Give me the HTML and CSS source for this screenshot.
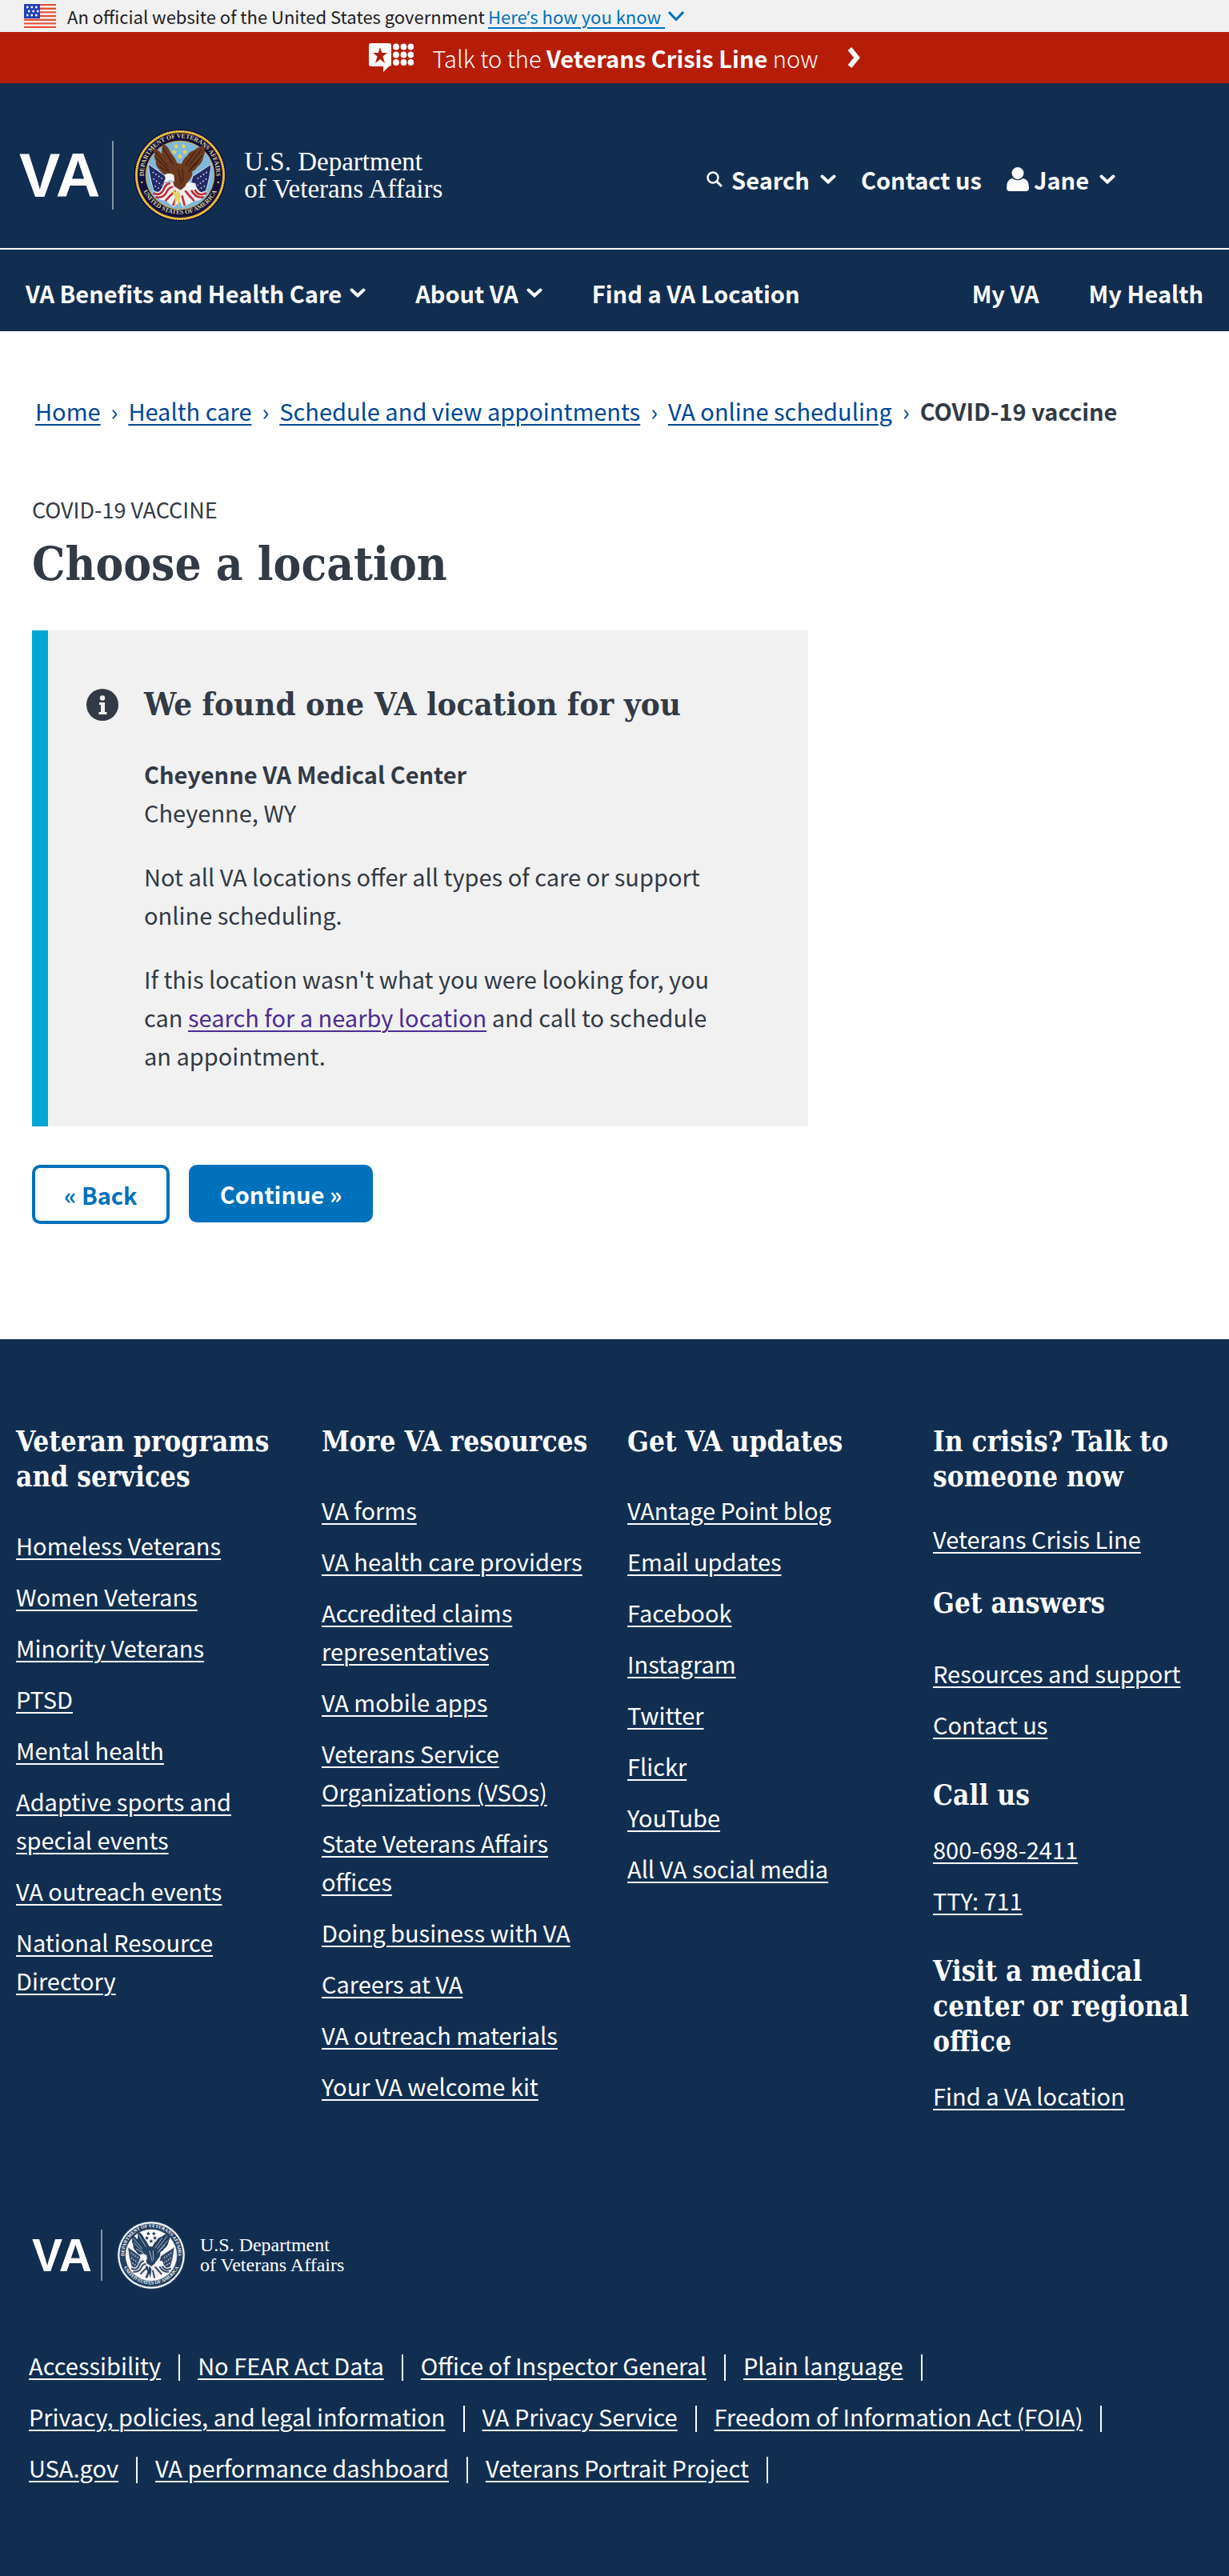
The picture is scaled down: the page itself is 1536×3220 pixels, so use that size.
FILE: index.html
```html
<!DOCTYPE html>
<html lang="en">
<head>
<meta charset="utf-8">
<meta name="viewport" content="width=device-width, initial-scale=1">
<title>Choose a location | Veterans Affairs</title>
<link rel="stylesheet" href="styles.css">
</head>
<body>
<svg class="sprite" aria-hidden="true">
  <symbol id="chevron" viewBox="0 0 20 12"><path d="M2.500 2.500 10 9.500l7.500-7" fill="none" stroke="currentColor" stroke-width="4" stroke-linecap="round"/></symbol>
  <symbol id="seal" viewBox="0 0 120 120">
    <circle class="seal-rim" cx="60" cy="60" r="57.500"/>
    <circle class="seal-rope" cx="60" cy="60" r="56"/>
    <circle class="seal-ring" cx="60" cy="60" r="54"/>
    <circle class="seal-sky" cx="60" cy="60" r="43.500"/>
    <g transform="translate(-6 -5) scale(.339)">
      <path class="seal-flag" d="M76 150 142 196 150 235 128 262 96 250Q80 200 76 150ZM312 150 242 196 232 235 262 262 292 250Q308 200 312 150Z"/>
      <path class="seal-dots" d="M92 180 128 205M94 205 128 230M100 232 124 246M296 180 260 205M294 205 260 230M288 232 264 246"/>
      <path class="seal-stripe-a" d="M92 252Q120 268 134 222L170 214 200 240 220 216 252 222Q262 268 296 252 284 288 250 288L205 312 195 290 170 312 140 286Q104 288 92 252Z"/>
      <path class="seal-stripe-b" d="M94 258Q122 274 136 240 144 222 158 222M104 274Q134 280 146 252 154 236 168 236M140 288Q156 268 178 250M168 306 184 268M294 258Q264 274 250 246M284 274Q252 280 236 246M248 288Q228 268 214 250M212 306 202 268"/>
      <path class="seal-eagle" d="M94 88Q112 94 126 112L128 72Q150 82 160 108 172 120 184 146L200 150Q206 130 222 118 228 104 248 98 262 84 286 82 292 104 282 124 278 146 262 158 254 172 240 178 244 196 226 214 216 236 196 248L172 232 166 204 150 194Q128 190 118 172 102 158 104 138 94 124 100 114 92 100 94 88Z"/>
      <path class="seal-feather" d="M104 106 150 160M106 128 152 174M132 90 168 150M118 160 156 182M276 94 226 160M278 118 232 170M264 140 226 180M250 104 214 156M186 168 200 224M204 168 206 216"/>
      <path class="seal-head" d="M136 192Q152 178 172 192L174 216Q160 208 150 214L132 222 140 204ZM218 222Q236 222 256 240 240 254 214 246Z"/>
      <path class="seal-gold" d="M170 240 180 262 186 246 196 262 190 308 184 282 174 310 176 272 166 256Z"/>
      <path class="seal-gold" d="m180 72 3 7 7 1-5 5 1 7-6-4-6 4 1-7-5-5 7-1zm28 0 3 7 7 1-5 5 1 7-6-4-6 4 1-7-5-5 7-1zm-35 22 3 7 7 1-5 5 1 7-6-4-6 4 1-7-5-5 7-1zm40 0 3 7 7 1-5 5 1 7-6-4-6 4 1-7-5-5 7-1zm-19 16 3 7 7 1-5 5 1 7-6-4-6 4 1-7-5-5 7-1z"/>
    </g>
    <circle class="seal-gold" cx="11.500" cy="69" r="1.200"/>
    <circle class="seal-gold" cx="108.500" cy="69" r="1.200"/>
    <path id="arc-top" d="M15 68A46 46 0 1 1 105 68" fill="none"/>
    <path id="arc-bottom" d="M9.500 70A52 52 0 0 0 110.500 70" fill="none"/>
  </symbol>
</svg>

<div class="gov-banner">
  <svg class="flag" viewBox="0 0 40 30" aria-hidden="true"><rect width="40" height="30" fill="#fff"/><path d="M0 1h40M0 5.700h40M0 10.400h40M0 15h40M0 19.700h40M0 24.400h40M0 29h40" stroke="#e3513a" stroke-width="2.400"/><rect width="20" height="18" fill="#2440b8"/><path d="M3 4h16M5 9h14M3 14h16" stroke="#fff" stroke-width="2.500" stroke-dasharray="2.500 3"/></svg>
  <span>An official website of the United States government</span>
  <a class="gov-link" href="#"><span>Here<span class="apostrophe">’</span>s how you know </span><svg class="icon-chevron" aria-hidden="true" viewBox="0 0 20 12"><path d="M1 1 10 10.500 19 1" fill="none" stroke="currentColor" stroke-width="3"/></svg></a>
</div>

<a class="crisis" href="#">
  <svg class="crisis-icon" viewBox="0 0 56 36" aria-hidden="true"><path d="M3 0h22q3 0 3 3v23q0 3-3 3l-7 7v-7H3q-3 0-3-3V3q0-3 3-3z" fill="#fff"/><path d="m14 5 2.300 7H23l-5.500 4.500L20 25l-6-5-6 5 2.500-8.500L5 12h6.700z" fill="#b51d09"/><g fill="#fff"><circle cx="34" cy="4.500" r="3.900"/><circle cx="43.500" cy="4.500" r="3.900"/><circle cx="52.500" cy="4.500" r="3.900"/><circle cx="34" cy="14.500" r="3.900"/><circle cx="43.500" cy="14.500" r="3.900"/><circle cx="52.500" cy="14.500" r="3.900"/><circle cx="34" cy="24" r="3.900"/><circle cx="43.500" cy="24" r="3.900"/><circle cx="52.500" cy="24" r="3.900"/></g></svg>
  <span>Talk to the <strong>Veterans Crisis Line</strong> now</span>
  <svg class="crisis-arrow" viewBox="0 0 16 26" aria-hidden="true"><path d="m3 2 9 11-9 11" fill="none" stroke="#fff" stroke-width="6"/></svg>
</a>

<header class="header">
  <div class="masthead">
    <a class="logo" href="#" aria-label="VA home">
      <span class="logo-va">VA</span>
      <span class="logo-rule"></span>
      <svg class="logo-seal" viewBox="0 0 120 120" aria-hidden="true"><use href="#seal"/><text class="seal-text"><textPath href="#arc-top" startOffset="50%" text-anchor="middle">DEPARTMENT OF VETERANS AFFAIRS</textPath></text><text class="seal-text"><textPath href="#arc-bottom" startOffset="50%" text-anchor="middle">UNITED STATES OF AMERICA</textPath></text></svg>
      <span class="logo-name">U.S. Department<br>of Veterans Affairs</span>
    </a>
    <div class="tools">
      <button class="tool" type="button"><svg class="icon-search" viewBox="0 0 20 20" aria-hidden="true"><circle cx="8" cy="8" r="6.500" fill="none" stroke="currentColor" stroke-width="2.500"/><path d="m13 13 6 6" stroke="currentColor" stroke-width="3"/></svg><span>Search</span><svg class="icon-chevron" aria-hidden="true"><use href="#chevron"/></svg></button>
      <a class="tool" href="#">Contact us</a>
      <button class="tool" type="button"><svg class="icon-user" viewBox="0 0 28 30" aria-hidden="true"><circle cx="14" cy="7.500" r="7.500" fill="currentColor"/><path d="M7 14q7 4.500 14 0 7 1.500 7 12 0 4-4 4H4q-4 0-4-4 0-10.500 7-12z" fill="currentColor"/></svg><span>Jane</span><svg class="icon-chevron" aria-hidden="true"><use href="#chevron"/></svg></button>
    </div>
  </div>
  <nav class="nav" aria-label="Primary">
    <button type="button">VA Benefits and Health Care<svg class="icon-chevron" aria-hidden="true"><use href="#chevron"/></svg></button>
    <button type="button">About VA<svg class="icon-chevron" aria-hidden="true"><use href="#chevron"/></svg></button>
    <a href="#">Find a VA Location</a>
    <a class="nav-right" href="#">My VA</a>
    <a href="#">My Health</a>
  </nav>
</header>

<main class="main">
  <nav class="crumbs" aria-label="Breadcrumb">
    <a href="#">Home</a><span class="crumb-sep">›</span>
    <a href="#">Health care</a><span class="crumb-sep">›</span>
    <a href="#">Schedule and view appointments</a><span class="crumb-sep">›</span>
    <a href="#">VA online scheduling</a><span class="crumb-sep">›</span>
    <strong>COVID-19 vaccine</strong>
  </nav>
  <p class="eyebrow">COVID-19 VACCINE</p>
  <h1 class="title">Choose a location</h1>
  <section class="alert">
    <svg class="alert-icon" viewBox="0 0 40 40" aria-hidden="true"><circle cx="20" cy="20" r="20" fill="#323a45"/><path d="M16 17h7v12h2.500v3h-10v-3H18v-9h-2z" fill="#f1f1f1"/><circle cx="20" cy="11.500" r="3.200" fill="#f1f1f1"/></svg>
    <div>
      <h2 class="alert-title">We found one VA location for you</h2>
      <p><strong>Cheyenne VA Medical Center</strong><br>Cheyenne, WY</p>
      <p>Not all VA locations offer all types of care or support online scheduling.</p>
      <p>If this location wasn't what you were looking for, you can <a class="visited" href="#">search for a nearby location</a> and call to schedule an appointment.</p>
    </div>
  </section>
  <div class="buttons">
    <button class="btn btn-back" type="button">« Back</button>
    <button class="btn btn-next" type="button">Continue »</button>
  </div>
</main>

<footer class="footer">
  <div class="columns">
    <section>
      <h2>Veteran programs and services</h2>
      <ul>
        <li><a href="#">Homeless Veterans</a></li>
        <li><a href="#">Women Veterans</a></li>
        <li><a href="#">Minority Veterans</a></li>
        <li><a href="#">PTSD</a></li>
        <li><a href="#">Mental health</a></li>
        <li><a href="#">Adaptive sports and special events</a></li>
        <li><a href="#">VA outreach events</a></li>
        <li><a href="#">National Resource Directory</a></li>
      </ul>
    </section>
    <section>
      <h2>More VA resources</h2>
      <ul>
        <li><a href="#">VA forms</a></li>
        <li><a href="#">VA health care providers</a></li>
        <li><a href="#">Accredited claims representatives</a></li>
        <li><a href="#">VA mobile apps</a></li>
        <li><a href="#">Veterans Service Organizations (VSOs)</a></li>
        <li><a href="#">State Veterans Affairs offices</a></li>
        <li><a href="#">Doing business with VA</a></li>
        <li><a href="#">Careers at VA</a></li>
        <li><a href="#">VA outreach materials</a></li>
        <li><a href="#">Your VA welcome kit</a></li>
      </ul>
    </section>
    <section>
      <h2>Get VA updates</h2>
      <ul>
        <li><a href="#">VAntage Point blog</a></li>
        <li><a href="#">Email updates</a></li>
        <li><a href="#">Facebook</a></li>
        <li><a href="#">Instagram</a></li>
        <li><a href="#">Twitter</a></li>
        <li><a href="#">Flickr</a></li>
        <li><a href="#">YouTube</a></li>
        <li><a href="#">All VA social media</a></li>
      </ul>
    </section>
    <section class="contact">
      <h2>In crisis? Talk to someone now</h2>
      <ul class="crisis-list"><li><a href="#">Veterans Crisis Line</a></li></ul>
      <h2>Get answers</h2>
      <ul class="answers-list">
        <li><a href="#">Resources and support</a></li>
        <li><a href="#">Contact us</a></li>
      </ul>
      <h2>Call us</h2>
      <ul>
        <li><a href="#">800-698-2411</a></li>
        <li><a href="#">TTY: 711</a></li>
      </ul>
      <h2>Visit a medical center or regional office</h2>
      <ul><li><a href="#">Find a VA location</a></li></ul>
    </section>
  </div>
  <a class="logo logo-small" href="#" aria-label="VA home">
    <span class="logo-va">VA</span>
    <span class="logo-rule"></span>
    <svg class="logo-seal" viewBox="0 0 120 120" aria-hidden="true"><use href="#seal"/><text class="seal-text"><textPath href="#arc-top" startOffset="50%" text-anchor="middle">DEPARTMENT OF VETERANS AFFAIRS</textPath></text><text class="seal-text"><textPath href="#arc-bottom" startOffset="50%" text-anchor="middle">UNITED STATES OF AMERICA</textPath></text></svg>
    <span class="logo-name">U.S. Department<br>of Veterans Affairs</span>
  </a>
  <ul class="legal">
    <li><a href="#">Accessibility</a></li>
    <li><a href="#">No FEAR Act Data</a></li>
    <li><a href="#">Office of Inspector General</a></li>
    <li><a href="#">Plain language</a></li>
    <li><a href="#">Privacy, policies, and legal information</a></li>
    <li><a href="#">VA Privacy Service</a></li>
    <li><a href="#">Freedom of Information Act (FOIA)</a></li>
    <li><a href="#">USA.gov</a></li>
    <li><a href="#">VA performance dashboard</a></li>
    <li><a href="#">Veterans Portrait Project</a></li>
  </ul>
</footer>
</body>
</html>
```
FILE: styles.css
```css
:root {
  --navy: #112e51;
  --blue: #0071bb;
  --ink: #323a45;
  --sans: "Noto Sans CJK SC", "Noto Sans CJK JP", "Open Sans", sans-serif;
  --slab: "DejaVu Serif Condensed", "DejaVu Serif", serif;

  --rim: #d9ab33;
  --rope: #f0cf4e;
  --ring: #14103f;
  --sky: #7fb8d8;
  --seal-type: #d8cf9a;
  --field: #242a66;
  --field-edge: #c9d6e4;
  --red: #b8303c;
  --eagle: #6b3a20;
  --feather: #47220f;
  --gold: #e9d25a;
}

* { box-sizing: border-box; }

body {
  margin: 0;
  background: #fff;
  color: var(--ink);
  font: 29px/48px var(--sans);
}

h1, h2, p, ul { margin: 0; padding: 0; }
h1, h2 { font-family: var(--slab); font-weight: 700; }
ul { list-style: none; }
a { text-decoration-thickness: 2px; text-underline-offset: 4px; }

button {
  padding: 0;
  border: 0;
  background: none;
  color: inherit;
  font: inherit;
}

.sprite { position: absolute; width: 0; height: 0; }
.icon-chevron { flex: none; width: 20px; height: 12px; }

/* Government banner */
.gov-banner {
  display: flex;
  align-items: center;
  height: 40px;
  padding: 0 30px;
  background: #f1f1f1;
  color: #212121;
  font-size: 22px;
  line-height: 40px;
}
.flag { width: 40px; height: 30px; margin-right: 14px; }
.gov-link {
  display: flex;
  align-items: center;
  gap: 4px;
  margin-left: 4px;
  color: var(--blue);
  white-space: pre;
}
.apostrophe { font-family: "Open Sans", sans-serif; }

/* Crisis line */
.crisis {
  display: flex;
  align-items: center;
  justify-content: center;
  height: 64px;
  background: #b51d09;
  color: #fff;
  font-weight: 300;
  text-decoration: none;
}
.crisis strong { font-weight: 700; }
.crisis-icon { width: 56px; height: 36px; margin-right: 24px; }
.crisis-arrow { width: 16px; height: 26px; margin-left: 37px; }

/* Header */
.header { background: var(--navy); color: #fff; font-weight: 700; }
.header a { color: inherit; text-decoration: none; }
.masthead {
  display: flex;
  align-items: center;
  justify-content: space-between;
  padding: 56px 142px 32px 24px;
  border-bottom: 2px solid #fff;
}

.logo {
  display: flex;
  align-items: center;
  color: #fff;
  text-decoration: none;
}
.logo-va { font: 700 77px/88px "Liberation Sans", sans-serif; }
.logo-rule { width: 2px; height: 86px; margin: 0 24px 0 15px; background: #8292a5; }
.logo-seal { width: 118px; height: 118px; }
.logo-name {
  margin-left: 21px;
  font: 33px/34px "Liberation Serif", serif;
}

.tools { display: flex; align-items: center; padding-top: 10px; }
.tool { display: flex; align-items: center; }
.tool + .tool { margin-left: 31px; }
.tool .icon-chevron { margin-left: 13px; }
.icon-search { width: 20px; height: 20px; margin-right: 11px; }
.icon-user { width: 28px; height: 30px; margin-right: 6px; }

.nav { display: flex; align-items: center; height: 102px; padding: 6px 32px 0; }
.nav > * { display: flex; align-items: center; margin-right: 62px; }
.nav > :last-child { margin-right: 0; }
.nav .icon-chevron { margin-left: 10px; }
.nav .nav-right { margin-left: auto; }

/* Main */
.main { padding: 75px 40px 144px; }
.crumbs { display: flex; margin: 0 4px 76px; }
.crumbs a { color: #004795; }
.crumb-sep { margin: 0 13px; color: #004795; }
.eyebrow { font-size: 27px; }
.title { margin: 14px 0 53px; font-size: 58px; line-height: 60px; }

.alert {
  display: flex;
  gap: 32px;
  max-width: 970px;
  padding: 66px 120px 65px 48px;
  border-left: 20px solid #02a6d4;
  background: #f1f1f1;
}
.alert-icon { flex: none; width: 40px; height: 40px; margin-top: 7px; }
.alert-title { margin-bottom: 37px; font-size: 40px; line-height: 52px; white-space: nowrap; }
.alert p + p { margin-top: 32px; }
.visited { color: #4c2c92; }

.buttons { display: flex; align-items: flex-start; gap: 24px; margin-top: 48px; }
.btn { height: 72px; padding: 0 39px; border-radius: 10px; font-weight: 700; }
.btn-back { height: 74px; padding: 0 36px; border: 4px solid var(--blue); background: #fff; color: var(--blue); }
.btn-next { background: var(--blue); color: #fff; }

/* Footer */
.footer { padding: 106px 20px 112px; background: var(--navy); color: #fff; }
.footer a { color: #fff; }
.columns {
  display: grid;
  grid-template-columns: repeat(4, 1fr);
  gap: 40px;
  padding-right: 8px;
}
.columns h2 { margin-bottom: 39px; font-size: 35px; line-height: 44px; }
.columns li + li { margin-top: 16px; }
.contact h2 { margin-bottom: 21px; }
.contact ul + h2 { margin-top: 43px; }
.contact .crisis-list { margin-top: 31px; }
.contact .crisis-list + h2 { margin-top: 35px; }
.contact .answers-list { margin-top: 41px; }

.logo-small { margin: 132px 0 69px 20px; }
.logo-small .logo-va { font-size: 57px; line-height: 66px; }
.logo-small .logo-rule { height: 64px; margin: 0 17px 0 11px; }
.logo-small .logo-seal {
  --rim: #e9edf2;
  --rope: #fff;
  --ring: #24405f;
  --sky: #fff;
  --seal-type: #fff;
  --field: #34496a;
  --field-edge: #fff;
  --red: #34496a;
  --eagle: #24405f;
  --feather: #a9b6c6;
  --gold: #24405f;
  width: 88px;
  height: 88px;
}
.logo-small .logo-name { margin-left: 17px; font-size: 24px; line-height: 25px; }

.legal { display: flex; flex-wrap: wrap; row-gap: 16px; padding: 0 16px; }
.legal li { display: flex; align-items: center; }
.legal li::after { content: ""; width: 2px; height: 33px; margin: 6px 22px 0; background: #fff; }

/* Seal artwork */
.seal-rim { fill: var(--rim); stroke: var(--ring); stroke-width: 2; }
.seal-rope { fill: none; stroke: var(--rope); stroke-width: 2; stroke-dasharray: 2 1; }
.seal-ring { fill: var(--ring); }
.seal-sky { fill: var(--sky); stroke: var(--rim); }
.seal-text { fill: var(--seal-type); font: 700 8px "Liberation Serif", serif; }
.seal-flag { fill: var(--field); stroke: var(--field-edge); stroke-width: 3; }
.seal-dots { fill: none; stroke: var(--field-edge); stroke-width: 5; stroke-dasharray: 5 8; }
.seal-stripe-a { fill: #f3eeee; }
.seal-stripe-b { fill: none; stroke: var(--red); stroke-width: 8; }
.seal-eagle { fill: var(--eagle); }
.seal-feather { fill: none; stroke: var(--feather); stroke-width: 4; }
.seal-head { fill: #f4f6f8; }
.seal-gold { fill: var(--gold); }
```
